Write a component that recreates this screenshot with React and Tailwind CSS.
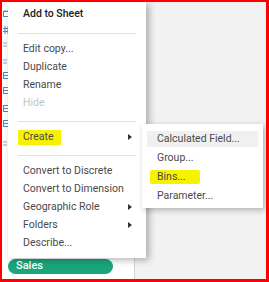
import React from "react";

const font = { fontFamily: "Roboto, 'Liberation Sans', sans-serif" };

function Arrow() {
  return (
    <svg width="4" height="6" viewBox="0 0 4 6" className="block">
      <path d="M0 0 L4 3 L0 6 Z" fill="#333" />
    </svg>
  );
}

function Sep({ first }) {
  return (
    <div
      className={`${first ? "mt-[10px]" : "mt-[9px]"} mb-[6px] mx-[10px] h-px bg-[#e2e2e2]`}
    />
  );
}

function Item({ children, sub, disabled, strong }) {
  return (
    <div
      className={`h-[18px] flex items-center justify-between pl-[15px] pr-[14px] text-[10.5px] ${
        disabled ? "text-[#c4c4c4]" : strong ? "text-[#222] font-medium" : "text-[#4a4a4a]"
      }`}
    >
      <span>{children}</span>
      {sub && <Arrow />}
    </div>
  );
}

function Cal() {
  return (
    <svg width="7" height="7" viewBox="0 0 7 7">
      <rect x="0.5" y="1.5" width="6" height="5" fill="none" stroke="#4a8cc0" />
      <line x1="2" y1="0" x2="2" y2="2" stroke="#4a8cc0" />
      <line x1="5" y1="0" x2="5" y2="2" stroke="#4a8cc0" />
    </svg>
  );
}
function Hash() {
  return (
    <svg width="7" height="8" viewBox="0 0 7 8">
      <path d="M2 0 V8 M5 0 V8 M0 2.5 H7 M0 5.5 H7" stroke="#4a8cc0" fill="none" />
    </svg>
  );
}
function Eq() {
  return (
    <svg width="6" height="5" viewBox="0 0 6 5">
      <path d="M0 1 H4 M0 4 H4" stroke="#7aa7cc" fill="none" />
    </svg>
  );
}
function Tbl() {
  return (
    <svg width="7" height="7" viewBox="0 0 7 7">
      <rect x="0.5" y="0.5" width="6" height="6" fill="none" stroke="#4a8cc0" />
      <path d="M0 3.5 H7" stroke="#4a8cc0" />
    </svg>
  );
}

export default function App() {
  return (
    <div
      className="w-[269px] h-[282px] border-t-2 border-l-2 border-r-[3px] border-b-[3px] border-[#ff0000] overflow-hidden"
      style={font}
    >
      <div className="relative w-full h-full flex bg-[#f2f2f2]">
        {/* left field panel */}
        <div className="w-[133px] h-full bg-white border-r border-[#d4d4d4] flex flex-col">
          <div className="flex flex-col items-start pl-[1px]">
            <div className="mt-[8px]"><Cal /></div>
            <div className="mt-[9px]"><Hash /></div>
            <div className="mt-[8px]"><Eq /></div>
            <div className="mt-[12px]"><Eq /></div>
            <div className="mt-[8px]"><Tbl /></div>
            <div className="mt-[8px]"><Tbl /></div>
            <div className="mt-[11px]"><Tbl /></div>
            <div className="mt-[8px]"><Tbl /></div>
            <div className="mt-[14px]"><Eq /></div>
          </div>
          <div className="mt-auto mb-[5px] ml-[6px] w-[105px] h-[15px] rounded-full bg-[#1aa67a] flex items-center pl-[8px] text-[11px] text-white font-medium">
            Sales
          </div>
        </div>

        {/* main context menu */}
        <div className="absolute left-[6px] top-0 w-[138px] h-[256px] bg-white shadow-[3px_2px_7px_rgba(0,0,0,0.3)] pt-[3px]">
          <Item strong>Add to Sheet</Item>
          <Sep first />
          <Item>Edit copy...</Item>
          <Item>Duplicate</Item>
          <Item>Rename</Item>
          <Item disabled>Hide</Item>
          <Sep />
          <div className="h-[18px] flex items-center justify-between pl-[10px] pr-[14px] text-[10.5px] text-[#4a4a4a]">
            <span className="h-[15px] flex items-center pl-[5px] pr-[7px] bg-[#f7f200]">Create</span>
            <Arrow />
          </div>
          <Sep />
          <Item>Convert to Discrete</Item>
          <Item>Convert to Dimension</Item>
          <Item sub>Geographic Role</Item>
          <Item sub>Folders</Item>
          <Item>Describe...</Item>
        </div>

        {/* submenu */}
        <div className="absolute left-[140px] top-[122px] w-[121px] h-[84px] bg-white shadow-[2px_2px_6px_rgba(0,0,0,0.28)] px-[5px] pt-[5px] text-[10.5px] text-[#4a4a4a]">
          <div className="h-[19px] flex items-center">
            <div className="w-full h-[16px] flex items-center pl-[10px] bg-[#f0f0f0]">Calculated Field...</div>
          </div>
          <div className="h-[19px] flex items-center pl-[10px]">Group...</div>
          <div className="h-[19px] flex items-center pl-[3px]">
            <span className="h-[14px] flex items-center pl-[7px] pr-[14px] bg-[#f7f200] rounded-[2px]">Bins...</span>
          </div>
          <div className="h-[19px] flex items-center pl-[10px]">Parameter...</div>
        </div>
      </div>
    </div>
  );
}
